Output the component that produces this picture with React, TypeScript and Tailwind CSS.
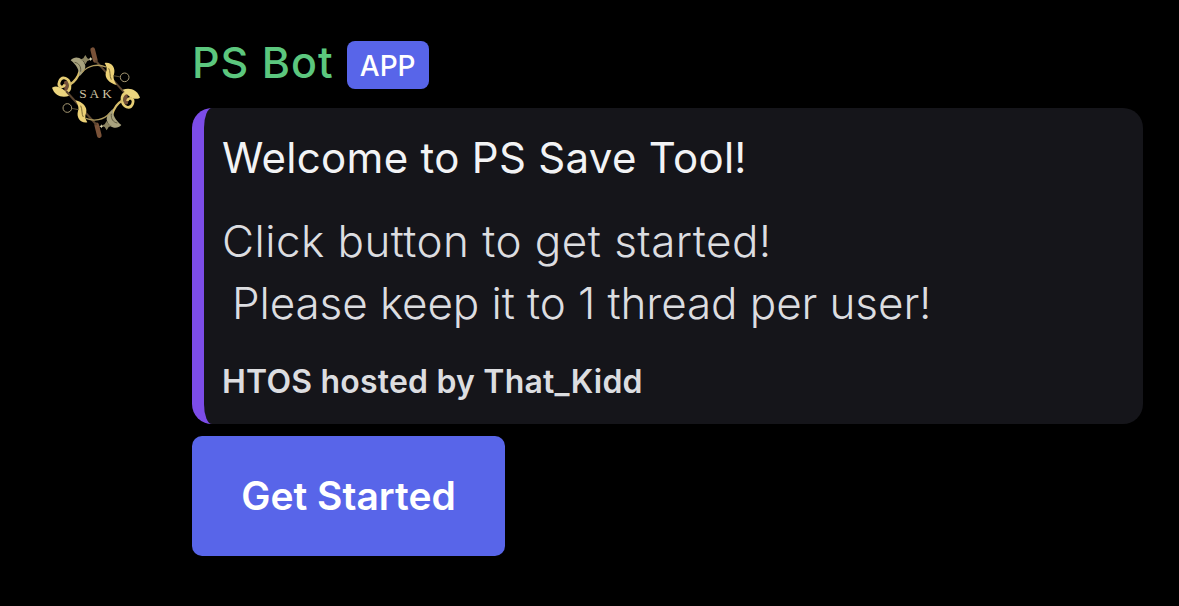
import React from "react";

function Flourish() {
  return (
    <g>
      {/* stick + diagonal bar */}
      <path d="M158 44 L166 76" stroke="#7a5238" strokeWidth="14" strokeLinecap="round" />
      <path d="M166 76 L258 178" stroke="#5c4630" strokeWidth="6" />
      <path d="M78 144 L80 168" stroke="#74503a" strokeWidth="13" strokeLinecap="round" />
      {/* left scroll */}
      <path d="M46 160 C62 180 92 178 90 150 C88 130 66 120 58 140 C52 156 70 162 74 148" stroke="#e6cd74" strokeWidth="8" />
      <path d="M36 158 C52 148 70 160 88 182 C66 190 44 182 36 158 Z" fill="#ecd57e" />
      <path d="M88 150 C102 142 114 128 120 106" stroke="#d6bd6a" strokeWidth="7" />
      {/* olive leaf */}
      <path d="M92 76 C106 60 130 68 136 92 C136 106 128 114 118 124 C118 106 110 90 92 76 Z" fill="#a8a27e" />
      <path d="M104 82 C116 84 124 94 122 110" stroke="#5f5a40" strokeWidth="3" />
      {/* gold ornament */}
      <path d="M194 84 C214 80 228 98 222 118 C218 130 224 140 230 150 C208 146 192 128 198 112 C202 102 200 94 194 84 Z" fill="#ecd176" />
      <path d="M206 100 C212 108 208 122 214 134" stroke="#7d6a34" strokeWidth="3" />
      {/* arc and ring */}
      <path d="M126 112 C146 90 174 86 198 96" stroke="#b09c5e" strokeWidth="4" />
      <circle cx="254" cy="127" r="13" stroke="#a89a74" strokeWidth="3" />
      <path d="M220 122 L242 126" stroke="#6d5f3c" strokeWidth="2.5" />
      {/* sparkle */}
      <path d="M136 60 L142 70 L152 74 L142 78 L136 88 L130 78 L120 74 L130 70 Z" fill="#8c8562" />
      <path d="M152 66 L154 70 L158 72 L154 74 L152 78 L150 74 L146 72 L150 70 Z" fill="#dcd5ae" />
    </g>
  );
}

function SakLogo() {
  return (
    <svg width="110" height="115" viewBox="0 0 330 345" fill="none" className="shrink-0">
      <Flourish />
      <g transform="rotate(180 168 173)">
        <Flourish />
      </g>
      <text x="171" y="188" textAnchor="middle" fontSize="40" letterSpacing="9" fill="#d0c4a2" fontFamily="'Liberation Serif', serif">
        SAK
      </text>
    </svg>
  );
}

export default function App() {
  return (
    <div className="flex h-[606px] w-[1179px] items-start gap-[42px] overflow-hidden bg-black pl-[40px] pr-9 pt-[35px] font-['Inter',sans-serif]">
      <SakLogo />
      <div className="mt-[6px] min-w-0 flex-1">
        <div className="flex h-[48px] items-center gap-[13px]">
          <span className="-mt-[6px] text-[43px] leading-none font-medium tracking-[1px] text-[#5cc77e]">PS Bot</span>
          <span className="flex h-[48px] w-[82px] items-center justify-center rounded-lg bg-[#5865e9] pt-px text-[28px] font-medium text-white">
            APP
          </span>
        </div>
        <div className="mt-[19px] flex h-[316px] flex-col rounded-[20px] border-l-[12px] border-[#7c4ce8] bg-[#15151a] pl-[19px] pt-[25px]">
          <p className="-ml-px text-[42px] leading-[50px] font-normal tracking-[0.3px] text-[#f2f3f5]">Welcome to PS Save Tool!</p>
          <p className="-ml-px mt-[27px] text-[44px] leading-[62px] font-light tracking-[0.45px] text-[#dcdde0]">Click button to get started!</p>
          <p className="-ml-px pl-[10px] text-[44px] leading-[62px] font-light tracking-[-0.1px] text-[#dcdde0]">Please keep it to 1 thread per user!</p>
          <p className="-ml-px mt-[28px] text-[32px] leading-[40px] font-semibold tracking-[0.2px] text-[#dcdde0]">HTOS hosted by That_Kidd</p>
        </div>
        <button className="mt-3 flex h-[120px] w-[313px] items-center justify-center rounded-[10px] bg-[#5865e9] text-[39px] font-semibold text-white">
          Get Started
        </button>
      </div>
    </div>
  );
}
